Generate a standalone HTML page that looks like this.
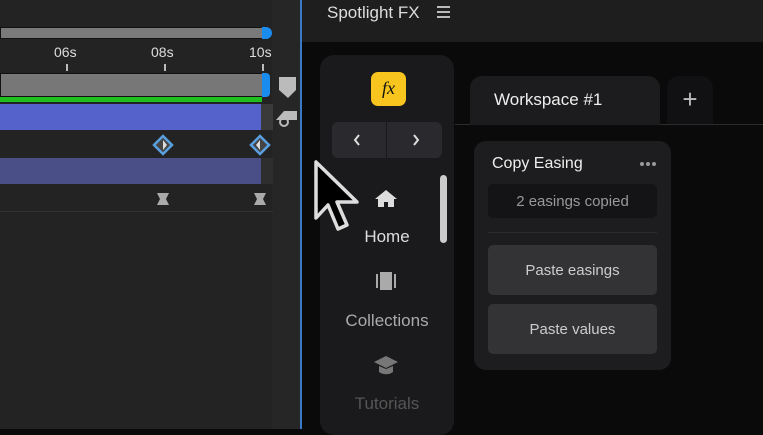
<!DOCTYPE html><html><head><style>
*{margin:0;padding:0;box-sizing:border-box}
body{width:763px;height:429px;overflow:hidden;background:#0a0a0b;font-family:"Liberation Sans",sans-serif;position:relative}
.a{position:absolute}
</style></head><body>
<div class="a" style="left:0;top:0;width:300px;height:429px;background:#232323"></div>
<div class="a" style="left:272px;top:0;width:28px;height:429px;background:#262626"></div>
<div class="a" style="left:0;top:27px;width:263px;height:12px;background:#7a7a7a;border:1px solid #111"></div>
<div class="a" style="left:262px;top:27px;width:10px;height:12px;background:#1a8cf0;border-radius:0 6px 6px 0"></div>
<div class="a" style="left:54px;top:44px;color:#ddd;font-size:14px">06s</div>
<div class="a" style="left:151px;top:44px;color:#ddd;font-size:14px">08s</div>
<div class="a" style="left:249px;top:44px;color:#ddd;font-size:14px">10s</div>
<div class="a" style="left:66px;top:64px;width:2px;height:7px;background:#bbb"></div>
<div class="a" style="left:164px;top:64px;width:2px;height:7px;background:#bbb"></div>
<div class="a" style="left:262px;top:64px;width:2px;height:7px;background:#bbb"></div>
<div class="a" style="left:0;top:73px;width:263px;height:24px;background:#777;border:1px solid #111"></div>
<div class="a" style="left:262px;top:73px;width:8px;height:24px;background:#1a8cf0;border-radius:0 4px 4px 0"></div>
<div class="a" style="left:0;top:97px;width:262px;height:5px;background:#1fbf1f"></div>
<div class="a" style="left:0;top:104px;width:261px;height:26px;background:#5662cc"></div>
<div class="a" style="left:261px;top:104px;width:12px;height:26px;background:#3a3a3a"></div>
<div class="a" style="left:0;top:158px;width:261px;height:26px;background:#4a4f88"></div>
<div class="a" style="left:261px;top:158px;width:12px;height:26px;background:#2e2e2e"></div>
<div class="a" style="left:0;top:211px;width:273px;height:1px;background:#333"></div>
<svg class="a" style="left:0;top:0" width="300" height="429">
<path d="M279 77h17v13l-8 8l-9-8z" fill="#bbb"/>
<path d="M276 120l8-9h13v9h-10" fill="#bbb"/><circle cx="284" cy="122" r="4" fill="none" stroke="#bbb" stroke-width="2"/>
<g stroke="#5a9fe0" stroke-width="2.5" fill="#444"><path d="M163 136l9 9l-9 9l-9-9z"/><path d="M260 136l9 9l-9 9l-9-9z"/></g>
<path d="M163 140v10l4-5z M260 140v10l-4-5z" fill="#ddd"/>
<path d="M157 193h12l-3 6l3 6h-12l3-6z M254 193h12l-3 6l3 6h-12l3-6z" fill="#aaa"/>
</svg>
<div class="a" style="left:300px;top:0;width:2px;height:429px;background:#3a78c8"></div>
<div class="a" style="left:302px;top:0;width:461px;height:42px;background:#1e1e1e"></div>
<div class="a" style="left:327px;top:3px;color:#ddd;font-size:17px">Spotlight FX</div>
<div class="a" style="left:437px;top:6px;width:13px;height:2px;background:#bbb;box-shadow:0 5px 0 #bbb,0 10px 0 #bbb"></div>
<div class="a" style="left:320px;top:55px;width:134px;height:380px;background:#1a1a1c;border-radius:14px"></div>
<div class="a" style="left:371px;top:72px;width:35px;height:34px;background:#f7c51e;border-radius:7px;color:#111;font:italic 18px 'Liberation Serif',serif;text-align:center;line-height:32px">fx</div>
<div class="a" style="left:332px;top:122px;width:110px;height:36px;background:#2a2a2e;border-radius:6px"></div>
<div class="a" style="left:386px;top:122px;width:1px;height:36px;background:#1a1a1c"></div>
<svg class="a" style="left:300px;top:120px" width="160" height="300">
<path d="M59 15l-4 5l4 5 M114 15l4 5l-4 5" stroke="#ddd" stroke-width="2" fill="none"/>
<path d="M86 70l-11 9h3v8h6v-5h4v5h6v-8h3z" fill="#ddd"/>
<path d="M80 152h12v18h-12z M76 154h2v14h-2z M94 154h2v14h-2z" fill="#aaa"/>
<path d="M86 236l-12 6l12 6l12-6z M79 246v6c4 3 10 3 14 0v-6l-7 3z" fill="#777"/>
</svg>
<div class="a" style="left:320px;top:227px;width:134px;text-align:center;color:#ddd;font-size:17px">Home</div>
<div class="a" style="left:320px;top:311px;width:134px;text-align:center;color:#aaa;font-size:17px">Collections</div>
<div class="a" style="left:320px;top:394px;width:134px;text-align:center;color:#555;font-size:17px">Tutorials</div>
<div class="a" style="left:440px;top:175px;width:7px;height:68px;background:#ccc;border-radius:4px"></div>
<div class="a" style="left:455px;top:124px;width:308px;height:1px;background:#2c2c2c"></div>
<div class="a" style="left:470px;top:76px;width:190px;height:49px;background:#1c1c1e;border-radius:12px 12px 0 0"></div>
<div class="a" style="left:494px;top:90px;color:#eee;font-size:17px">Workspace #1</div>
<div class="a" style="left:667px;top:76px;width:46px;height:48px;background:#111113;border-radius:12px 12px 0 0;color:#bbb;font-size:26px;text-align:center;line-height:46px">+</div>
<div class="a" style="left:474px;top:141px;width:197px;height:229px;background:#1d1d1f;border-radius:12px"></div>
<div class="a" style="left:492px;top:155px;color:#eee;font-size:16px">Copy Easing</div>
<div class="a" style="left:640px;top:162px;width:4px;height:4px;border-radius:2px;background:#999;box-shadow:6px 0 #999,12px 0 #999"></div>
<div class="a" style="left:488px;top:184px;width:169px;height:34px;background:#141416;border-radius:5px;color:#999;font-size:15px;text-align:center;line-height:35px">2 easings copied</div>
<div class="a" style="left:488px;top:232px;width:169px;height:1px;background:#2c2c2e"></div>
<div class="a" style="left:488px;top:245px;width:169px;height:50px;background:#333335;border-radius:5px;color:#ccc;font-size:15px;text-align:center;line-height:51px">Paste easings</div>
<div class="a" style="left:488px;top:304px;width:169px;height:50px;background:#333335;border-radius:5px;color:#ccc;font-size:15px;text-align:center;line-height:51px">Paste values</div>
<svg class="a" style="left:310px;top:158px" width="60" height="85"><path d="M6 4v56l12-13l10 24l9-4l-10-23h20z" fill="#000" stroke="#ddd" stroke-width="3.5" stroke-linejoin="round"/></svg>
</body></html>
